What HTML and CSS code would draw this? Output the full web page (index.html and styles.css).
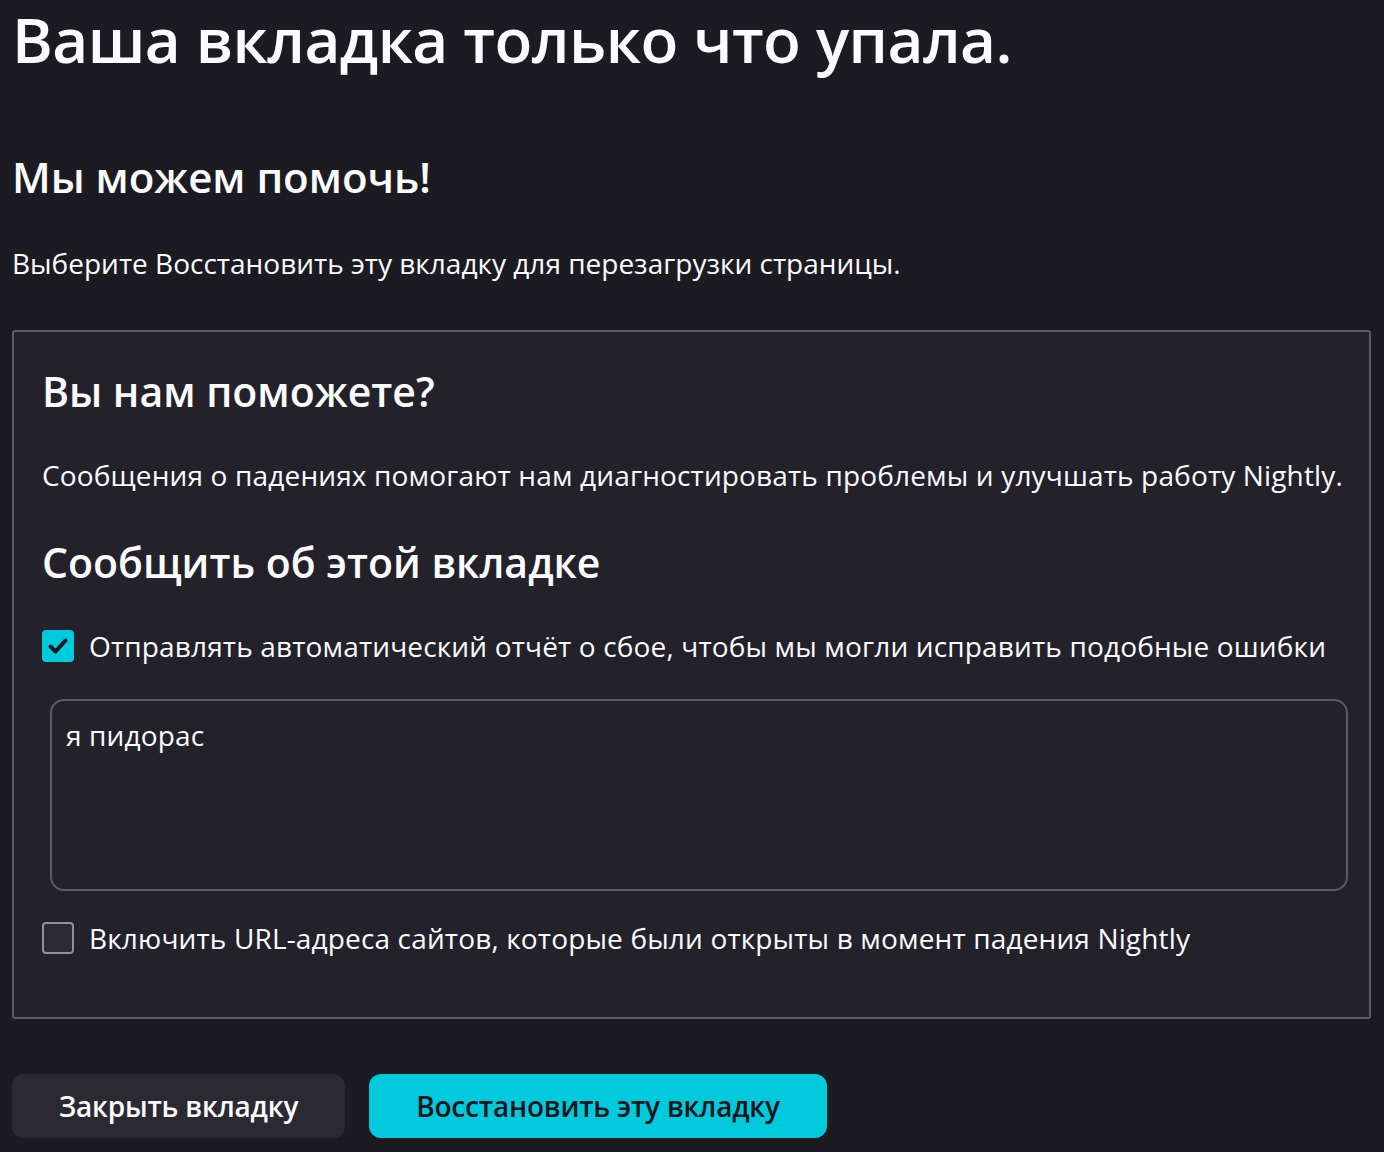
FILE: index.html
```html
<!DOCTYPE html>
<html lang="ru">
<head>
<meta charset="utf-8">
<title>Вкладка упала</title>
<link rel="stylesheet" href="styles.css">
</head>
<body>
<main class="page">
  <h1 class="title">Ваша вкладка только что упала.</h1>
  <h2 class="subtitle">Мы можем помочь!</h2>
  <p class="lead">Выберите Восстановить эту вкладку для перезагрузки страницы.</p>

  <section class="report">
    <h2 class="report-title">Вы нам поможете?</h2>
    <p class="report-text">Сообщения о падениях помогают нам диагностировать проблемы и улучшать работу Nightly.</p>
    <h2 class="report-title report-title--second">Сообщить об этой вкладке</h2>

    <label class="check-row">
      <span class="check check--on">
        <svg viewBox="0 0 32 32" width="32" height="32" aria-hidden="true">
          <path d="M8.5 16.5 L13.5 21.5 L23.5 10.5" fill="none" stroke="#15141a" stroke-width="4" stroke-linecap="round" stroke-linejoin="round"/>
        </svg>
      </span>
      <span class="check-label">Отправлять автоматический отчёт о сбое, чтобы мы могли исправить подобные ошибки</span>
    </label>

    <textarea class="comment">я пидорас</textarea>

    <label class="check-row check-row--url">
      <span class="check"></span>
      <span class="check-label">Включить URL-адреса сайтов, которые были открыты в момент падения Nightly</span>
    </label>
  </section>

  <div class="actions">
    <button class="btn btn--secondary" type="button">Закрыть вкладку</button>
    <button class="btn btn--primary" type="button">Восстановить эту вкладку</button>
  </div>
</main>
</body>
</html>
```

FILE: styles.css
```css
html, body {
  margin: 0;
  padding: 0;
  background: #1c1b22;
}

body {
  color: #fbfbfe;
  font-family: "Open Sans", "Noto Sans", sans-serif;
}

.page {
  padding: 0 13px 0 12px;
}

.title {
  margin: 0;
  font-size: 62px;
  line-height: 78px;
  font-weight: 600;
  letter-spacing: -0.55px;
}

.subtitle {
  margin: 74px 0 0;
  font-size: 42px;
  line-height: 50px;
  font-weight: 600;
}

.lead {
  margin: 43px 0 0;
  font-size: 28px;
  line-height: 36px;
}

.report {
  margin-top: 49px;
  background: #23222b;
  border: 2px solid #5c5b64;
  border-radius: 3px;
  padding: 34px 22px 61px 28px;
}

.report-title {
  margin: 0;
  font-size: 41px;
  line-height: 50px;
  font-weight: 600;
}

.report-text {
  margin: 41px 0 0;
  font-size: 28px;
  line-height: 36px;
  letter-spacing: 0.15px;
}

.report-title--second {
  margin-top: 44px;
}

.check-row {
  display: flex;
  align-items: center;
  gap: 15px;
  margin-top: 41px;
}

.check-row--url {
  margin-top: 29px;
}

.check {
  flex: none;
  width: 32px;
  height: 32px;
  box-sizing: border-box;
  border: 2px solid #8f8f9d;
  border-radius: 4px;
  background: #2b2a33;
  display: flex;
  align-items: center;
  justify-content: center;
}

.check--on {
  border: none;
  background: #00cadb;
}

.check--on svg {
  display: block;
}

.check-label {
  font-size: 28px;
  line-height: 36px;
  letter-spacing: 0.15px;
}

.comment {
  display: block;
  box-sizing: border-box;
  width: calc(100% - 7px);
  height: 192px;
  margin: 35px 0 0 8px;
  padding: 16px 14px;
  background: #23222b;
  border: 2px solid #5c5b64;
  border-radius: 14px;
  color: #fbfbfe;
  font-family: "Open Sans", "Noto Sans", sans-serif;
  font-size: 28px;
  line-height: 36px;
  letter-spacing: 0.15px;
  resize: none;
  outline: none;
}

.actions {
  display: flex;
  gap: 24px;
  margin-top: 55px;
}

.btn {
  height: 64px;
  border: none;
  border-radius: 12px;
  padding: 0 47px;
  font-family: "Open Sans", "Noto Sans", sans-serif;
  font-size: 28px;
  font-weight: 600;
  letter-spacing: -0.2px;
}

.btn--secondary {
  background: #2b2a33;
  color: #fbfbfe;
}

.btn--primary {
  background: #00cadb;
  color: #15141a;
}
```
